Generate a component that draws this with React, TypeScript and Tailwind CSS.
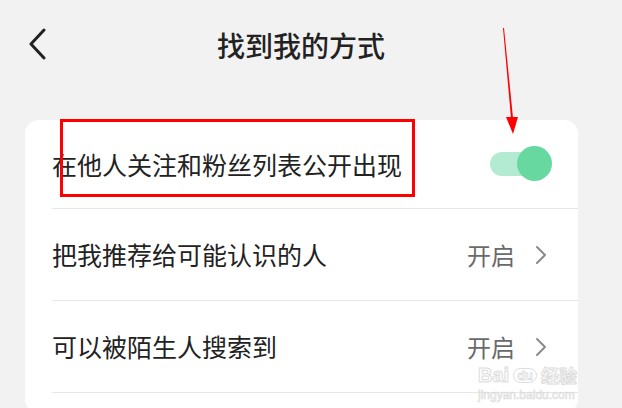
import React from "react";

const font = { fontFamily: '"Noto Sans CJK SC", "Noto Sans", sans-serif' };

function Chevron() {
  return (
    <svg width="12" height="20" viewBox="0 0 12 20" className="shrink-0">
      <path d="M2 2 L10 10 L2 18" fill="none" stroke="#8a8a8a" strokeWidth="2" strokeLinecap="round" strokeLinejoin="round" />
    </svg>
  );
}

function Row({ label, children, first }: { label: string; children: React.ReactNode; first?: boolean }) {
  return (
    <div className={`flex items-center justify-between pl-[27px] ${first ? "h-[88px]" : "h-[91px]"}`}>
      <span className="text-[25px] leading-none text-[#222]">{label}</span>
      {children}
    </div>
  );
}

export default function App() {
  return (
    <div className="relative w-[622px] h-[408px] overflow-hidden bg-[#f2f2f2]" style={font}>
      {/* header */}
      <div className="relative flex items-center justify-center h-[90px]">
        <svg width="20" height="32" viewBox="0 0 20 32" className="absolute left-[27px] top-[28px]">
          <path d="M17 2 L4 16 L17 30" fill="none" stroke="#222" strokeWidth="3" strokeLinecap="round" strokeLinejoin="round" />
        </svg>
        <span className="mr-[20px] text-[28px] font-medium text-[#222] leading-none">找到我的方式</span>
      </div>

      {/* card */}
      <div className="mt-[30px] ml-[25px] w-[553px] bg-white rounded-[14px]">
        <Row label="在他人关注和粉丝列表公开出现" first>
          <div className="relative w-[62px] h-[36px] mr-[26px] flex items-center">
            <div className="w-[52px] h-[24px] rounded-full bg-[#b3ebd2]" />
            <div className="absolute right-0 top-0 w-[35px] h-[35px] rounded-full bg-[#67d9a0]" />
          </div>
        </Row>
        <div className="ml-[27px] h-px bg-[#e6e6e6]" />
        <Row label="把我推荐给可能认识的人">
          <div className="flex items-center gap-[20px] mr-[31px]">
            <span className="text-[24px] leading-none text-[#6a6a6a]">开启</span>
            <Chevron />
          </div>
        </Row>
        <div className="ml-[27px] h-px bg-[#e6e6e6]" />
        <Row label="可以被陌生人搜索到">
          <div className="flex items-center gap-[20px] mr-[31px]">
            <span className="text-[24px] leading-none text-[#6a6a6a]">开启</span>
            <Chevron />
          </div>
        </Row>
        <div className="ml-[27px] h-px bg-[#e6e6e6]" />
        <div className="h-[20px]" />
      </div>

      {/* watermark */}
      <div className="absolute left-[478px] top-[365px] flex flex-col items-start pointer-events-none" style={{ fontFamily: '"Liberation Sans", "Noto Sans CJK SC", sans-serif' }}>
        <div className="flex items-center gap-[4px] text-[20px] font-bold leading-none text-transparent" style={{ WebkitTextStroke: "1px #dcdcdc" }}>
          <span>Bai</span>
          <span className="text-[13px] rounded-full border border-[#dcdcdc] px-[3px]" style={{ WebkitTextStroke: "0.8px #dcdcdc" }}>du</span>
          <span className="text-[18px]" style={{ fontFamily: '"Noto Sans CJK SC", sans-serif' }}>经验</span>
        </div>
        <span className="mt-[4px] text-[12px] leading-none text-transparent" style={{ WebkitTextStroke: "0.7px #dcdcdc" }}>jingyan.baidu.com</span>
      </div>

      {/* annotations */}
      <div className="absolute left-[60px] top-[119px] w-[355px] h-[78px] border-[3px] border-[#ff0000] pointer-events-none" />
      <svg className="absolute left-0 top-0 pointer-events-none" width="622" height="408">
        <polygon points="503,28 504,28 513,118 511,118" fill="#ff0000" />
        <polygon points="506,117 518,117 513,134" fill="#ff0000" />
      </svg>
    </div>
  );
}
